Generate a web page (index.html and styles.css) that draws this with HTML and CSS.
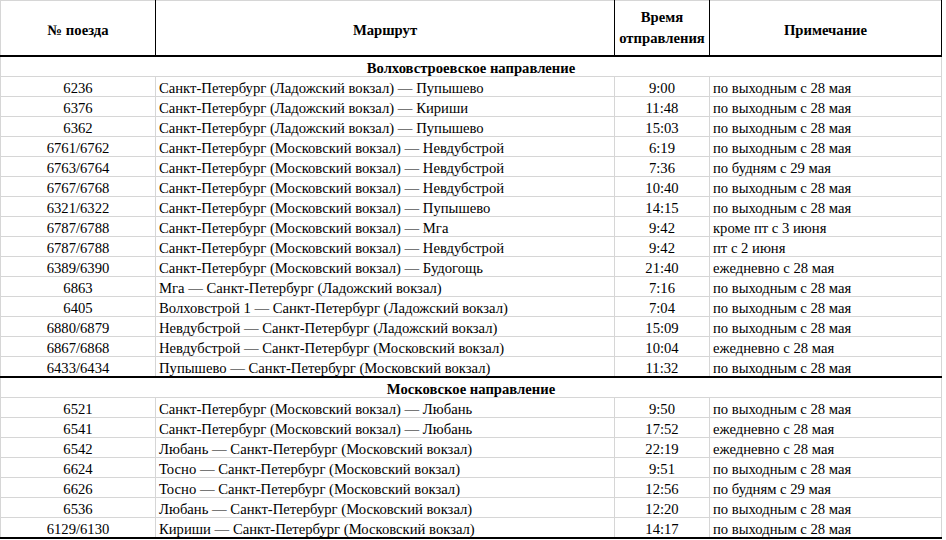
FILE: index.html
```html
<!DOCTYPE html>
<html>
<head>
<meta charset="utf-8">
<title>Расписание</title>
<link rel="stylesheet" href="styles.css">
</head>
<body>
<table class="sheet">
  <colgroup>
    <col class="c-num">
    <col class="c-route">
    <col class="c-time">
    <col class="c-note">
  </colgroup>
  <thead>
    <tr class="head">
      <th>№ поезда</th>
      <th>Маршрут</th>
      <th class="two">Время<br>отправления</th>
      <th>Примечание</th>
    </tr>
  </thead>
  <tbody>
    <tr class="section"><td colspan="4">Волховстроевское направление</td></tr>
    <tr><td class="num">6236</td><td class="txt">Санкт-Петербург (Ладожский вокзал) — Пупышево</td><td class="num">9:00</td><td class="txt">по выходным с 28 мая</td></tr>
    <tr><td class="num">6376</td><td class="txt">Санкт-Петербург (Ладожский вокзал) — Кириши</td><td class="num">11:48</td><td class="txt">по выходным с 28 мая</td></tr>
    <tr><td class="num">6362</td><td class="txt">Санкт-Петербург (Ладожский вокзал) — Пупышево</td><td class="num">15:03</td><td class="txt">по выходным с 28 мая</td></tr>
    <tr><td class="num">6761/6762</td><td class="txt">Санкт-Петербург (Московский вокзал) — Невдубстрой</td><td class="num">6:19</td><td class="txt">по выходным с 28 мая</td></tr>
    <tr><td class="num">6763/6764</td><td class="txt">Санкт-Петербург (Московский вокзал) — Невдубстрой</td><td class="num">7:36</td><td class="txt">по будням с 29 мая</td></tr>
    <tr><td class="num">6767/6768</td><td class="txt">Санкт-Петербург (Московский вокзал) — Невдубстрой</td><td class="num">10:40</td><td class="txt">по выходным с 28 мая</td></tr>
    <tr><td class="num">6321/6322</td><td class="txt">Санкт-Петербург (Московский вокзал) — Пупышево</td><td class="num">14:15</td><td class="txt">по выходным с 28 мая</td></tr>
    <tr><td class="num">6787/6788</td><td class="txt">Санкт-Петербург (Московский вокзал) — Мга</td><td class="num">9:42</td><td class="txt">кроме пт с 3 июня</td></tr>
    <tr><td class="num">6787/6788</td><td class="txt">Санкт-Петербург (Московский вокзал) — Невдубстрой</td><td class="num">9:42</td><td class="txt">пт с 2 июня</td></tr>
    <tr><td class="num">6389/6390</td><td class="txt">Санкт-Петербург (Московский вокзал) — Будогощь</td><td class="num">21:40</td><td class="txt">ежедневно с 28 мая</td></tr>
    <tr><td class="num">6863</td><td class="txt">Мга — Санкт-Петербург (Ладожский вокзал)</td><td class="num">7:16</td><td class="txt">по выходным с 28 мая</td></tr>
    <tr><td class="num">6405</td><td class="txt">Волховстрой 1 — Санкт-Петербург (Ладожский вокзал)</td><td class="num">7:04</td><td class="txt">по выходным с 28 мая</td></tr>
    <tr><td class="num">6880/6879</td><td class="txt">Невдубстрой — Санкт-Петербург (Ладожский вокзал)</td><td class="num">15:09</td><td class="txt">по выходным с 28 мая</td></tr>
    <tr><td class="num">6867/6868</td><td class="txt">Невдубстрой — Санкт-Петербург (Московский вокзал)</td><td class="num">10:04</td><td class="txt">ежедневно с 28 мая</td></tr>
    <tr class="last"><td class="num">6433/6434</td><td class="txt">Пупышево — Санкт-Петербург (Московский вокзал)</td><td class="num">11:32</td><td class="txt">по выходным с 28 мая</td></tr>
    <tr class="section"><td colspan="4">Московское направление</td></tr>
    <tr><td class="num">6521</td><td class="txt">Санкт-Петербург (Московский вокзал) — Любань</td><td class="num">9:50</td><td class="txt">по выходным с 28 мая</td></tr>
    <tr><td class="num">6541</td><td class="txt">Санкт-Петербург (Московский вокзал) — Любань</td><td class="num">17:52</td><td class="txt">ежедневно с 28 мая</td></tr>
    <tr><td class="num">6542</td><td class="txt">Любань — Санкт-Петербург (Московский вокзал)</td><td class="num">22:19</td><td class="txt">ежедневно с 28 мая</td></tr>
    <tr><td class="num">6624</td><td class="txt">Тосно — Санкт-Петербург (Московский вокзал)</td><td class="num">9:51</td><td class="txt">по выходным с 28 мая</td></tr>
    <tr><td class="num">6626</td><td class="txt">Тосно — Санкт-Петербург (Московский вокзал)</td><td class="num">12:56</td><td class="txt">по будням с 29 мая</td></tr>
    <tr><td class="num">6536</td><td class="txt">Любань — Санкт-Петербург (Московский вокзал)</td><td class="num">12:20</td><td class="txt">по выходным с 28 мая</td></tr>
    <tr class="last"><td class="num">6129/6130</td><td class="txt">Кириши — Санкт-Петербург (Московский вокзал)</td><td class="num">14:17</td><td class="txt">по выходным с 28 мая</td></tr>
  </tbody>
</table>
</body>
</html>
```

FILE: styles.css
```css
html, body {
  margin: 0;
  padding: 0;
  background: #ffffff;
}

body {
  font-family: "Liberation Serif", serif;
  font-size: 14.67px;
  color: #000000;
  overflow: hidden;
}

.sheet {
  border-collapse: collapse;
  table-layout: fixed;
  width: 941px;
  font-family: "Liberation Serif", serif;
  font-size: 14.67px;
}

.c-num { width: 155px; }
.c-route { width: 459px; }
.c-time { width: 95px; }
.c-note { width: 232px; }

.sheet td,
.sheet th {
  font-family: "Liberation Serif", serif;
  border: 1px solid #d6d6d6;
  padding: 0 3px;
  height: 19px;
  line-height: 16px;
  vertical-align: bottom;
  white-space: nowrap;
  overflow: hidden;
}

.head th {
  height: 50px;
  padding: 4px 1px 0 1px;
  font-weight: bold;
  text-align: center;
  vertical-align: middle;
  line-height: 20px;
  border-right: 1px solid #000000;
  border-bottom: 2px solid #000000;
}

.head th.two {
  padding-top: 0;
  padding-bottom: 0;
  height: 54px;
  line-height: 21px;
}

.head th:first-child {
  border-left: 1px solid #d6d6d6;
}

.num {
  text-align: center;
}

.txt {
  text-align: left;
}

.section td {
  font-weight: bold;
  text-align: center;
}

.last td {
  border-bottom: 2px solid #000000;
}
```
